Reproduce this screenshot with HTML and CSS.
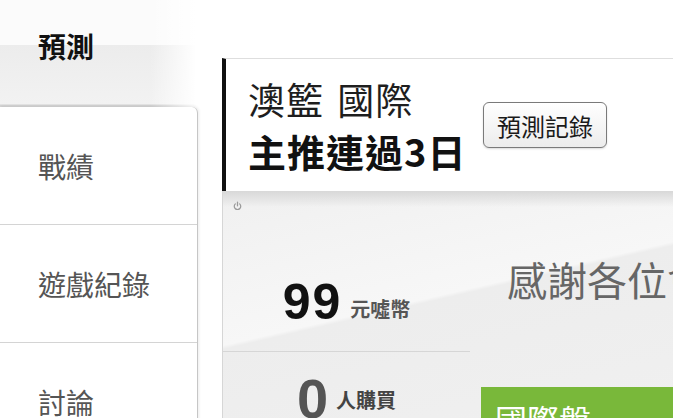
FILE: index.html
```html
<!DOCTYPE html>
<html lang="zh-Hant">
<head>
    <meta charset="UTF-8">
    <meta name="viewport" content="width=device-width, initial-scale=1.0">
    <title>預測</title>
    <link rel="stylesheet" href="styles.css">
</head>
<body>
    <div class="page">
        <aside class="side">
            <div class="tab-zone">
                <span class="tab-active">預測</span>
            </div>
            <ul class="side-menu">
                <li>戰績</li>
                <li>遊戲紀錄</li>
                <li>討論</li>
            </ul>
        </aside>

        <main class="main">
            <section class="game-head">
                <div class="game-title">
                    <div class="league">澳籃 國際</div>
                    <div class="streak">主推連過3日</div>
                </div>
                <button class="record-btn">預測記錄</button>
            </section>

            <section class="game-body">
                <span class="tip-icon">
                    <svg width="9" height="9" viewBox="0 0 10 10">
                        <path d="M2.6 3.2 A3.6 3.6 0 1 0 7.4 3.2" fill="none" stroke="#9a9a9a" stroke-width="1.4" stroke-linecap="round"/>
                        <path d="M5 1.2 V5.4" stroke="#9a9a9a" stroke-width="1.4" stroke-linecap="round"/>
                    </svg>
                </span>
                <div class="stats">
                    <div class="stat stat-price"><b>99</b><span>元噓幣</span></div>
                    <div class="stat stat-buyers"><b>0</b><span>人購買</span></div>
                </div>
                <div class="pitch">
                    <p class="thanks">感謝各位會員的支持</p>
                    <div class="market">國際盤</div>
                </div>
            </section>
        </main>
    </div>
</body>
</html>
```

FILE: styles.css
```css
body {
    margin: 0;
    background-color: #fff;
    font-family: "Noto Sans CJK TC", "Noto Sans", sans-serif;
    color: #222;
    overflow: hidden;
}
.page {
    display: flex;
    align-items: flex-start;
    width: 900px;
    height: 418px;
}

/* sidebar */
.side {
    width: 198px;
    flex-shrink: 0;
}
.tab-zone {
    height: 107px;
    box-sizing: border-box;
    padding: 26px 0 0 38px;
    background:
        linear-gradient(to right, rgba(255,255,255,0) 0, rgba(255,255,255,0) 150px, #fff 196px),
        linear-gradient(to bottom, #fbfbfb 0, #fbfbfb 45px, #ececec 45px, #f2f2f2 104px, #d4d4d4 105px, #d4d4d4 107px);
}
.tab-active {
    font-size: 28px;
    line-height: 40px;
    font-weight: bold;
    color: #111;
}
.side-menu {
    list-style: none;
    margin: 0;
    padding: 0;
    background-color: #fff;
    border-right: 1px solid #c6c6c6;
    border-top-right-radius: 6px;
    box-shadow: 1px -1px 3px rgba(0,0,0,0.08);
}
.side-menu li {
    height: 117px;
    display: flex;
    align-items: center;
    padding-left: 38px;
    font-size: 28px;
    color: #555;
    border-bottom: 1px solid #d4d4d4;
}

/* main panel */
.main {
    flex: 1;
    margin: 58px 0 0 24px;
}
.game-head {
    height: 133px;
    box-sizing: border-box;
    display: flex;
    align-items: center;
    padding-left: 22px;
    background-color: #fff;
    border-top: 1px solid #dedede;
    border-left: 4px solid #111;
}
.game-title {
    width: 214px;
    margin-right: 21px;
}
.league {
    font-size: 37px;
    line-height: 52px;
    letter-spacing: 1px;
    word-spacing: 4px;
    color: #1e1e1e;
    white-space: nowrap;
}
.streak {
    font-size: 38px;
    line-height: 52px;
    letter-spacing: 1px;
    font-weight: bold;
    color: #111;
    white-space: nowrap;
}
.record-btn {
    width: 124px;
    height: 46px;
    padding: 0;
    font-family: inherit;
    font-size: 24px;
    color: #1a1a1a;
    background: linear-gradient(#fff, #ececec);
    border: 1px solid #7a7a7a;
    border-radius: 6px;
    box-shadow: 0 1px 2px rgba(0,0,0,0.15);
}

.game-body {
    position: relative;
    height: 230px;
    display: flex;
    border-left: 1px solid #d6d6d6;
    background:
        linear-gradient(to bottom, #d8d8d8 0, rgba(236,236,236,0) 16px),
        linear-gradient(167deg, #f0f0f0 0, #f7f7f7 40%, #ededed 41%, #f1f1f1 100%);
}
.tip-icon {
    position: absolute;
    left: 10px;
    top: 10px;
    line-height: 0;
}
.stats {
    width: 247px;
}
.stat {
    text-align: center;
    white-space: nowrap;
}
.stat b {
    font-family: "Liberation Sans", Arial, sans-serif;
    font-weight: bold;
}
.stat span {
    font-weight: bold;
    margin-left: 8px;
}
.stat-price {
    height: 161px;
    box-sizing: border-box;
    padding-top: 86px;
    border-bottom: 1px solid #d6d6d6;
    line-height: 1;
}
.stat-price b {
    font-size: 50px;
    letter-spacing: 2px;
    color: #111;
}
.stat-price span {
    font-size: 20px;
    color: #555;
    vertical-align: 2px;
}
.stat-buyers {
    padding-top: 19px;
    line-height: 1;
}
.stat-buyers b {
    font-size: 56px;
    color: #555;
}
.stat-buyers span {
    font-size: 20px;
    color: #444;
    vertical-align: 10px;
}

.pitch {
    flex: 1;
    padding-top: 60px;
}
.thanks {
    margin: 0 0 0 37px;
    font-size: 40px;
    line-height: 56px;
    color: #666;
    white-space: nowrap;
}
.market {
    margin: 80px 0 0 11px;
    height: 60px;
    padding: 10px 0 0 14px;
    box-sizing: border-box;
    background-color: #79b83a;
    color: #fff;
    font-size: 32px;
    line-height: 44px;
}
```
